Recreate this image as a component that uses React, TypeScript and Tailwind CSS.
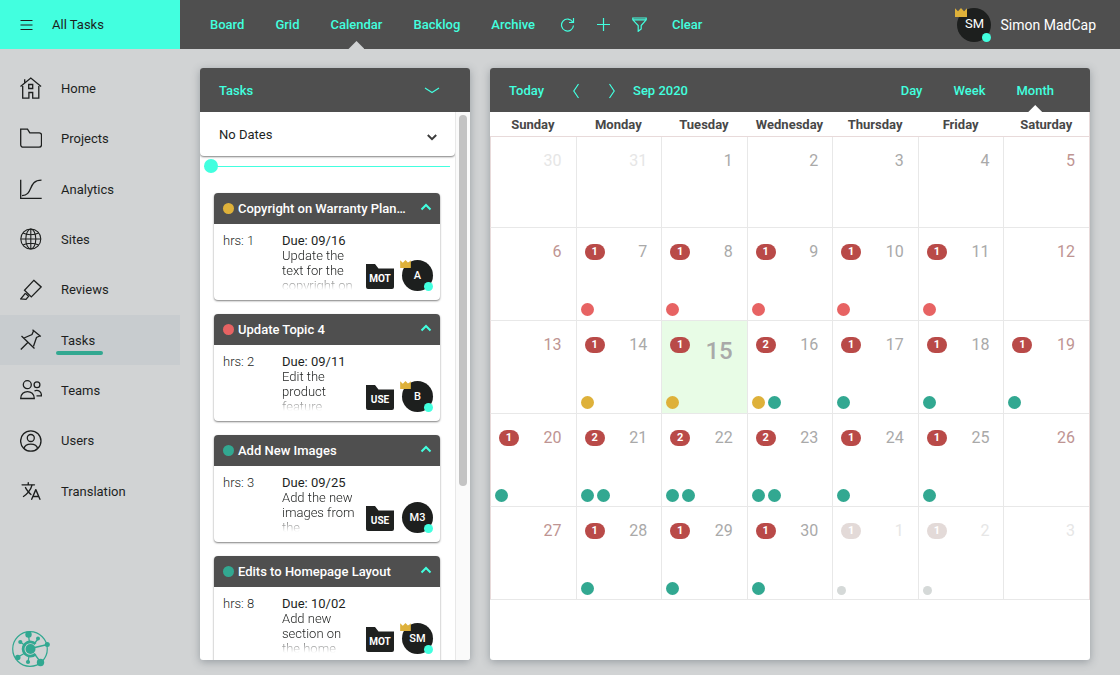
import type { ReactNode } from 'react';
import { IoLanguageOutline } from 'react-icons/io5';
import clsx from 'clsx';

type Status = 'amber' | 'red' | 'green' | 'muted';

interface Task {
  title: string;
  status: Status;
  hours: number;
  due: string;
  text: string;
  project: string;
  user: string;
  admin?: boolean;
}

interface Day {
  date: number;
  count?: number;
  dots?: Status[];
  outside?: boolean;
  today?: boolean;
}

const STATUS_COLORS: Record<Status, string> = {
  amber: 'bg-[#deb13a]',
  red: 'bg-[#e76363]',
  green: 'bg-[#32a891]',
  muted: 'bg-[#d5d9d8]',
};

const TASKS: Task[] = [
  { title: 'Copyright on Warranty Plan…', status: 'amber', hours: 1, due: '09/16', text: 'Update the text for the copyright on', project: 'MOT', user: 'A', admin: true },
  { title: 'Update Topic 4', status: 'red', hours: 2, due: '09/11', text: 'Edit the product feature', project: 'USE', user: 'B', admin: true },
  { title: 'Add New Images', status: 'green', hours: 3, due: '09/25', text: 'Add the new images from the', project: 'USE', user: 'M3' },
  { title: 'Edits to Homepage Layout', status: 'green', hours: 8, due: '10/02', text: 'Add new section on the home', project: 'MOT', user: 'SM', admin: true },
];

const WEEKDAYS = ['Sunday', 'Monday', 'Tuesday', 'Wednesday', 'Thursday', 'Friday', 'Saturday'];

const WEEKS: Day[][] = [
  [{ date: 30, outside: true }, { date: 31, outside: true }, { date: 1 }, { date: 2 }, { date: 3 }, { date: 4 }, { date: 5 }],
  [
    { date: 6 },
    { date: 7, count: 1, dots: ['red'] },
    { date: 8, count: 1, dots: ['red'] },
    { date: 9, count: 1, dots: ['red'] },
    { date: 10, count: 1, dots: ['red'] },
    { date: 11, count: 1, dots: ['red'] },
    { date: 12 },
  ],
  [
    { date: 13 },
    { date: 14, count: 1, dots: ['amber'] },
    { date: 15, count: 1, dots: ['amber'], today: true },
    { date: 16, count: 2, dots: ['amber', 'green'] },
    { date: 17, count: 1, dots: ['green'] },
    { date: 18, count: 1, dots: ['green'] },
    { date: 19, count: 1, dots: ['green'] },
  ],
  [
    { date: 20, count: 1, dots: ['green'] },
    { date: 21, count: 2, dots: ['green', 'green'] },
    { date: 22, count: 2, dots: ['green', 'green'] },
    { date: 23, count: 2, dots: ['green', 'green'] },
    { date: 24, count: 1, dots: ['green'] },
    { date: 25, count: 1, dots: ['green'] },
    { date: 26 },
  ],
  [
    { date: 27 },
    { date: 28, count: 1, dots: ['green'] },
    { date: 29, count: 1, dots: ['green'] },
    { date: 30, count: 1, dots: ['green'] },
    { date: 1, count: 1, dots: ['muted'], outside: true },
    { date: 2, count: 1, dots: ['muted'], outside: true },
    { date: 3, outside: true },
  ],
];

function LineIcon({ children }: { children: ReactNode }) {
  return (
    <svg viewBox="0 0 22 22" className="size-[22px] shrink-0" fill="none" stroke="currentColor" strokeWidth="1.3" aria-hidden="true">
      {children}
    </svg>
  );
}

const NAV_ITEMS: { label: string; icon: ReactNode; active?: boolean }[] = [
  {
    label: 'Home',
    icon: (
      <LineIcon>
        <path d="M.5 9.5 10.8 1l10.3 8.5M4.7 6V2.3M2.7 9v12.2h6.2v-5.7h3.8v5.7h6.1V9" />
        <path d="M8.7 7.5h4v4h-4z" />
      </LineIcon>
    ),
  },
  {
    label: 'Projects',
    icon: (
      <LineIcon>
        <path d="M.7 2.2h6.8l2.3 3.6h9.5a2.2 2.2 0 0 1 2.2 2.2v9.8a2.4 2.4 0 0 1-2.4 2.4H3.2a2.5 2.5 0 0 1-2.5-2.5z" />
      </LineIcon>
    ),
  },
  {
    label: 'Analytics',
    icon: (
      <LineIcon>
        <path d="M.7 1.7v18.6h21M2 17.6c11.5 0 5.5-15.5 19.5-15.5" />
      </LineIcon>
    ),
  },
  {
    label: 'Sites',
    icon: (
      <LineIcon>
        <g strokeWidth="1.1">
          <circle cx="10.8" cy="11" r="10" />
          <ellipse cx="10.8" cy="11" rx="5" ry="10" />
          <path d="M10.8 1v20M.8 11h20M3 5c4 2.3 11.6 2.3 15.6 0M3 17c4-2.3 11.6-2.3 15.6 0" />
        </g>
      </LineIcon>
    ),
  },
  {
    label: 'Reviews',
    icon: (
      <LineIcon>
        <path d="m13.8 1.3 7.3 6.6-9.8 10-6.8-6.7z" />
        <path d="M5.5 14.2.8 19.8l5.200.5 2.600-3.100-3-2.600" />
      </LineIcon>
    ),
  },
  {
    label: 'Tasks',
    active: true,
    icon: (
      <LineIcon>
        <path d="m12.5.8 8.3 6.800M13.600 1.800 12 5.500 4 9M19.800 7l-3.300 1.500-3 8.800M1.500 7l13 12.500M7.800 13.500.8 20.500" />
      </LineIcon>
    ),
  },
  {
    label: 'Teams',
    icon: (
      <LineIcon>
        <circle cx="7.3" cy="5.7" r="4" />
        <path d="M.7 19.5c0-9.300 13.600-9.300 13.600 0z" />
        <circle cx="17" cy="5.7" r="2.9" />
        <path d="M14.5 11.800c4-1.300 7 1 7 5h-5" />
      </LineIcon>
    ),
  },
  {
    label: 'Users',
    icon: (
      <LineIcon>
        <circle cx="10.8" cy="11" r="10.2" />
        <circle cx="10.8" cy="8" r="3.5" />
        <path d="M4 18.5c1.200-5.800 12.400-5.800 13.600 0" />
      </LineIcon>
    ),
  },
  { label: 'Translation', icon: <IoLanguageOutline className="size-[22px] shrink-0" aria-hidden="true" /> },
];

function Crown({ className }: { className: string }) {
  return (
    <svg viewBox="0 0 12 9" className={clsx('absolute text-[#deb13a]', className)} fill="currentColor" aria-hidden="true">
      <path d="M0 0.300 3 3.200 6 0 9 3.200 12 0.300V9H0z" />
    </svg>
  );
}

function Avatar({ initials, admin, large }: { initials: string; admin?: boolean; large?: boolean }) {
  return (
    <span
      className={clsx(
        'relative flex shrink-0 items-center justify-center rounded-full bg-[#1d1f1e] text-white',
        large ? 'size-[34px] text-[13px]' : 'size-[31px] text-[11px] font-medium',
      )}
    >
      {initials}
      {admin && <Crown className={large ? 'top-0 -left-0.5 h-[9px] w-3' : '-left-0.5 top-0 h-2 w-[11px]'} />}
      <span className="absolute right-0 bottom-0 size-[9px] rounded-full bg-[#42ffdf]" />
    </span>
  );
}

function ProjectBadge({ code }: { code: string }) {
  return (
    <span className="relative flex h-[25px] w-7 items-end justify-center pb-1">
      <svg viewBox="0 0 28 25" className="absolute inset-0 size-full text-[#1f2120]" fill="currentColor" aria-hidden="true">
        <path d="M0 0h9l3.500 4.500H28V23a2 2 0 0 1-2 2H2a2 2 0 0 1-2-2z" />
      </svg>
      <span className="relative text-[10px] leading-3 font-bold text-white">{code}</span>
    </span>
  );
}

function TaskCard({ task }: { task: Task }) {
  return (
    <article className="shrink-0 overflow-hidden rounded bg-white shadow-[0_1px_2px_rgba(0,0,0,0.5)]">
      <header className="flex h-[31px] items-center bg-[#4f4f4f] pr-2 pl-[9px]">
        <span className={clsx('size-[11px] shrink-0 rounded-full', STATUS_COLORS[task.status])} />
        <h3 className="ml-1 text-[13px] font-medium whitespace-nowrap text-white">{task.title}</h3>
        <button type="button" aria-label="Collapse" className="ml-auto pb-1 text-[#42ffdf]">
          <svg viewBox="0 0 12 8" className="h-2 w-3" fill="none" stroke="currentColor" strokeWidth="2">
            <path d="m1.500 6.500 4.500-4.500 4.500 4.500" />
          </svg>
        </button>
      </header>
      <div className="flex h-[76px] pt-[9px] pr-[7px] pl-[9px] text-[13px] leading-[15px] text-[#1d1f1e]">
        <span className="w-[59px] shrink-0 font-light">hrs: {task.hours}</span>
        <div className="w-[76px] shrink-0">
          <div className="whitespace-nowrap">Due: {task.due}</div>
          <p className="h-[45px] font-light [mask-image:linear-gradient(to_bottom,black_60%,transparent_93%)]">{task.text}</p>
        </div>
        <div className="ml-auto flex items-end gap-2 pb-[9px]">
          <span className="pb-0.5">
            <ProjectBadge code={task.project} />
          </span>
          <Avatar initials={task.user} admin={task.admin} />
        </div>
      </div>
    </article>
  );
}

function TasksPanel() {
  return (
    <section className="flex w-[270px] shrink-0 flex-col overflow-hidden rounded-[3px] bg-white shadow-[0_2px_8px_rgba(80,90,100,0.45)]">
      <header className="flex h-11 shrink-0 items-center justify-between bg-[#4f4f4f] pt-px pr-[30px] pl-[19px] text-[#42ffdf]">
        <h2 className="text-[13px] font-medium">Tasks</h2>
        <button type="button" aria-label="Collapse panel">
          <svg viewBox="0 0 16 7" className="h-[7px] w-4" fill="none" stroke="currentColor" strokeWidth="1.2">
            <path d="m1 1 7 4.500L15 1" />
          </svg>
        </button>
      </header>
      <div className="flex min-h-0 flex-1">
        <div className="min-w-0 flex-1 overflow-hidden">
          <div className="relative flex h-11 rounded-b shadow-[0_1px_2px_rgba(0,0,0,0.5)]">
            <select aria-label="Date filter" className="size-full appearance-none pt-px pl-[19px] text-[13px] text-[#1d1f1e]">
              <option>No Dates</option>
            </select>
            <svg viewBox="0 0 10 7" className="pointer-events-none absolute top-[22px] right-[18px] h-[7px] w-2.5 text-[#3c3c3c]" fill="none" stroke="currentColor" strokeWidth="2">
              <path d="m.8 1 4.200 4.200L9.200 1" />
            </svg>
          </div>
          <div className="pt-[3px] pr-[5px] pl-1">
            <input
              type="range"
              defaultValue={0}
              aria-label="Timeline position"
              className="block h-3.5 w-full appearance-none bg-transparent bg-[linear-gradient(#42ffdf,#42ffdf)] bg-[length:100%_1px] bg-center bg-no-repeat [&::-webkit-slider-thumb]:size-3.5 [&::-webkit-slider-thumb]:appearance-none [&::-webkit-slider-thumb]:rounded-full [&::-webkit-slider-thumb]:bg-[#42ffdf]"
            />
          </div>
          <div className="flex flex-col gap-3.5 pt-5 pr-[15px] pl-3.5">
            {TASKS.map((task) => (
              <TaskCard key={task.title} task={task} />
            ))}
          </div>
        </div>
        {/* Scroll track */}
        <div className="flex w-[15px] justify-center border-l border-[#e8e8e8] bg-[#fafafa] pt-[3px]">
          <div className="h-[68%] w-2 rounded-full bg-[#c3c3c3]" />
        </div>
      </div>
    </section>
  );
}

function DayCell({ day, weekend, first }: { day: Day; weekend: boolean; first: boolean }) {
  return (
    <td className={clsx('border-b border-l border-[#e8e8e8] p-0 align-top first:border-l-[#e8dada]', day.today && 'bg-[#e8fce6]')}>
      <div className={clsx('flex flex-col justify-between pt-3.5 pb-1', first ? 'h-[90px]' : 'h-[92px]')}>
        <div className="flex h-5 items-center pr-3.5 pl-2">
          {day.count && (
            <span
              className={clsx(
                'flex h-4 w-5 items-center justify-center rounded-full text-[11px] font-bold text-white',
                day.outside ? 'bg-[#e3dad8]' : 'bg-[#b94a48]',
              )}
            >
              {day.count}
            </span>
          )}
          <span
            className={clsx(
              'ml-auto',
              day.today ? 'pt-3 text-2xl font-medium' : 'text-base',
              day.outside ? 'text-[#e6e6e6]' : weekend ? 'text-[#be9492]' : 'text-[#a9a9a9]',
            )}
          >
            {day.date}
          </span>
        </div>
        <div className="flex items-end gap-[3px] pl-1">
          {day.dots?.map((dot, i) => (
            <span key={i} className={clsx('rounded-full', dot === 'muted' ? 'size-[9px]' : 'size-[13px]', STATUS_COLORS[dot])} />
          ))}
        </div>
      </div>
    </td>
  );
}

function CalendarPanel() {
  return (
    <section className="min-w-0 flex-1 overflow-hidden rounded-[3px] bg-white shadow-[0_2px_8px_rgba(80,90,100,0.45)]">
      <header className="flex h-11 items-center bg-[#4f4f4f] pt-px pr-9 pl-[19px] text-[13px] font-medium text-[#42ffdf]">
        <button type="button">Today</button>
        <button type="button" aria-label="Previous month" className="ml-7">
          <svg viewBox="0 0 8 16" className="h-4 w-2" fill="none" stroke="currentColor" strokeWidth="1.2">
            <path d="M6.500 1 1.800 8l4.700 7" />
          </svg>
        </button>
        <button type="button" aria-label="Next month" className="ml-7">
          <svg viewBox="0 0 8 16" className="h-4 w-2" fill="none" stroke="currentColor" strokeWidth="1.2">
            <path d="M1.500 1 6.200 8l-4.700 7" />
          </svg>
        </button>
        <h2 className="ml-[17px]">Sep 2020</h2>
        <div className="ml-auto flex gap-[31px] self-stretch">
          <button type="button">Day</button>
          <button type="button">Week</button>
          <button type="button" className="relative">
            Month
            <span className="absolute bottom-0 left-1/2 h-[7px] w-3.5 -translate-x-1/2 bg-white [clip-path:polygon(50%_0,100%_100%,0_100%)]" />
          </button>
        </div>
      </header>
      <table className="w-full table-fixed border-separate border-spacing-0 border-r border-[#e8dada]">
        <thead>
          <tr>
            {WEEKDAYS.map((name) => (
              <th key={name} scope="col" className="h-[25px] border-b border-[#e8dada] p-0 pt-0.5 text-[13px] font-bold text-[#484848]">
                {name}
              </th>
            ))}
          </tr>
        </thead>
        <tbody>
          {WEEKS.map((week, w) => (
            <tr key={w}>
              {week.map((day, d) => (
                <DayCell key={d} day={day} weekend={d === 0 || d === 6} first={w === 0} />
              ))}
            </tr>
          ))}
        </tbody>
      </table>
    </section>
  );
}

function TopBar() {
  return (
    <header className="flex h-[49px] shrink-0 bg-[#4f4f4f]">
      <div className="flex w-[180px] shrink-0 items-center bg-[#42ffdf] pl-5 text-[13px] text-[#1d1f1e]">
        <button type="button" aria-label="Toggle menu">
          <svg viewBox="0 0 13 12" className="h-3 w-[13px]" stroke="currentColor" strokeWidth="1">
            <path d="M.5 1.500h12M.5 6h12M.5 10.500h12" />
          </svg>
        </button>
        <h1 className="ml-[19px]">All Tasks</h1>
      </div>
      <nav className="flex items-stretch pl-[30px] text-[13px] font-medium text-[#42ffdf]">
        <div className="flex gap-[31px]">
          {['Board', 'Grid', 'Calendar', 'Backlog', 'Archive'].map((label) => (
            <a key={label} href="#" className="relative flex items-center">
              {label}
              {label === 'Calendar' && (
                <span className="absolute bottom-0 left-1/2 h-2 w-4 -translate-x-1/2 bg-[#d1d3d4] [clip-path:polygon(50%_0,100%_100%,0_100%)]" />
              )}
            </a>
          ))}
        </div>
        <div className="flex items-center gap-[21px] pl-[25px]">
          <button type="button" aria-label="Refresh">
            <svg viewBox="0 0 15 15" className="size-[15px]" fill="none" stroke="currentColor" strokeWidth="1.2">
              <path d="M12.700 5A6 6 0 1 0 13.500 8.500M13.500 1v4.500H9" />
            </svg>
          </button>
          <button type="button" aria-label="Add task">
            <svg viewBox="0 0 15 15" className="size-[15px]" fill="none" stroke="currentColor" strokeWidth="1.2">
              <path d="M7.500 1v13M1 7.500h13" />
            </svg>
          </button>
          <button type="button" aria-label="Filter">
            <svg viewBox="0 0 15 15" className="size-[15px]" fill="none" stroke="currentColor" strokeWidth="1.2">
              <path d="M.8 1h13.400v1.800L9.200 8.500V12l-3 2.300V8.500L.8 2.800zM.8 2.800h13.400" />
            </svg>
          </button>
        </div>
        <button type="button" className="ml-[25px]">Clear</button>
      </nav>
      <div className="ml-auto flex items-center gap-[9px] pr-6 text-sm text-white">
        <Avatar initials="SM" admin large />
        <span>Simon MadCap</span>
      </div>
    </header>
  );
}

function Logo() {
  return (
    <svg viewBox="0 0 38 38" className="size-[38px] text-[#32a891]" fill="currentColor" aria-hidden="true">
      <g fill="none" stroke="currentColor">
        <circle cx="18" cy="19" r="17.300" strokeWidth="1.2" />
        <path d="M23.500 14a7.200 7.200 0 1 0 0 10" strokeWidth="2.800" />
        <path d="M16.500 5l1 8M26 9l-4 5M35.500 14.500 18.500 18.500M8.500 12l5 4M6 27l7-4M16 32l1-6M28.500 32l-6-8" strokeWidth="1.3" />
      </g>
      <circle cx="18.500" cy="19" r="5" />
      <circle cx="16.500" cy="4.500" r="3.200" />
      <circle cx="26" cy="8.500" r="2" />
      <circle cx="35.300" cy="14.500" r="2.500" />
      <circle cx="8.300" cy="12" r="2.100" />
      <circle cx="5.800" cy="27.500" r="2.700" />
      <circle cx="16" cy="32" r="2.100" />
      <circle cx="28.500" cy="32.500" r="3.700" />
    </svg>
  );
}

function Sidebar() {
  return (
    <aside className="flex w-[180px] shrink-0 flex-col pt-3.5 pb-[7px]">
      <nav className="flex h-[453px] flex-col justify-between text-[13px] text-[#1d1f1e]">
        {NAV_ITEMS.map(({ label, icon, active }) => (
          <a key={label} href="#" className={clsx('flex h-[50px] items-center gap-[19px] pl-5', active && 'bg-[#c8cccf]')}>
            {icon}
            <span className="relative pt-px">
              {label}
              {active && <span className="absolute top-[21px] -right-2 -left-[5px] h-1 rounded-full bg-[#32a891]" />}
            </span>
          </a>
        ))}
      </nav>
      <div className="mt-auto pl-3">
        <Logo />
      </div>
    </aside>
  );
}

export default function App() {
  return (
    <div className="flex h-screen flex-col bg-[#d1d3d4] font-[Roboto,'Liberation_Sans',sans-serif]">
      <TopBar />
      <div className="flex min-h-0 flex-1">
        <Sidebar />
        <main className="flex min-w-0 flex-1 gap-5 pt-[19px] pr-[30px] pb-[15px] pl-5">
          <TasksPanel />
          <CalendarPanel />
        </main>
      </div>
    </div>
  );
}
